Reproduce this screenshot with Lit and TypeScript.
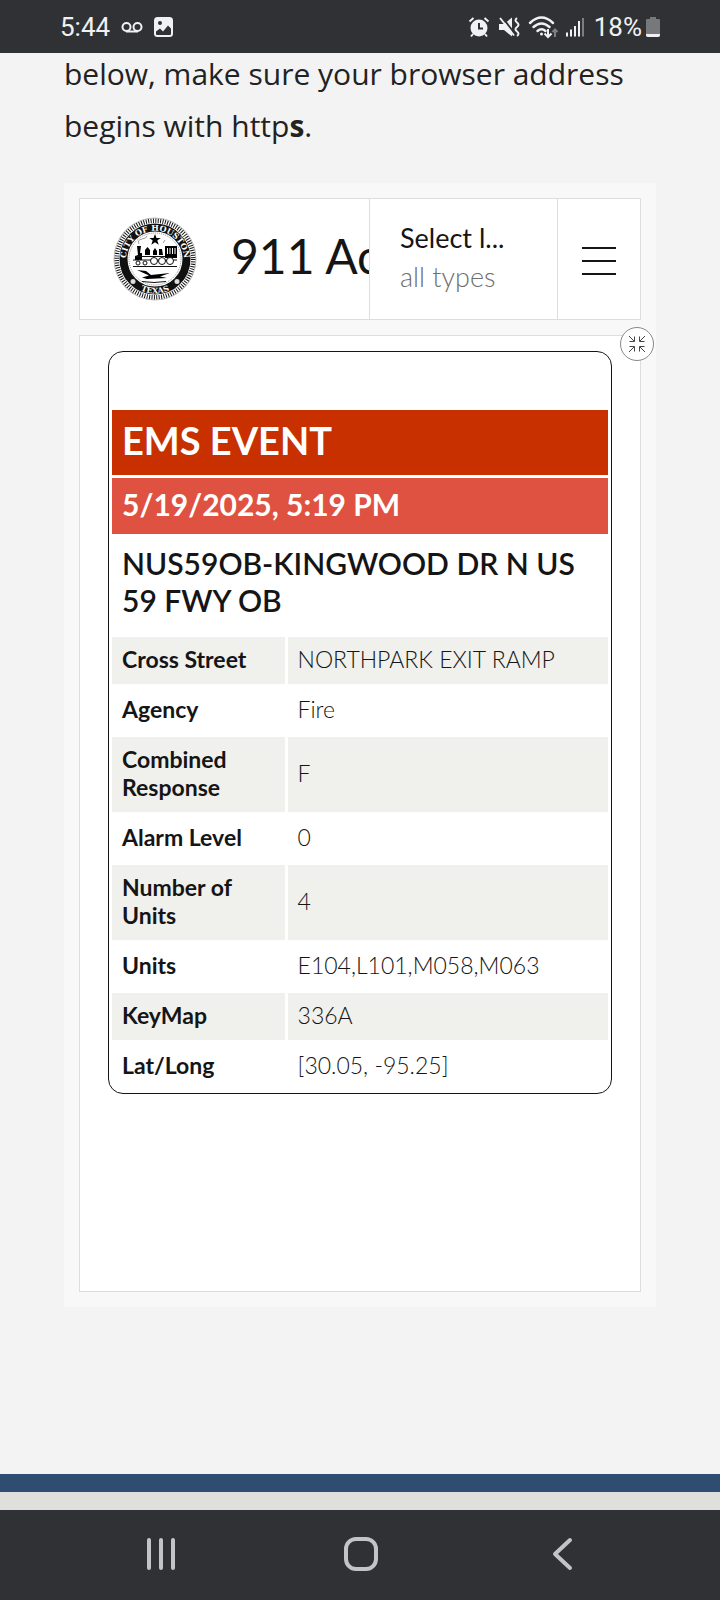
import { html, css, svg, LitElement } from "lit";
import { customElement, property } from "lit/decorators.js";

type Row = [label: string, value: string];

@customElement("city-seal")
export class CitySeal extends LitElement {
  render() {
    return html`
      <svg viewBox="0 0 84 84" role="img" aria-label="City of Houston, Texas">
        <defs>
          <path id="top" d="M17 57.500a29 29 0 1 1 50 0" />
          <path id="bottom" d="M7.500 42a34.500 34.500 0 0 0 69 0" />
        </defs>
        <circle class="rope" cx="42" cy="42" r="38.500" />
        <circle class="rim" cx="42" cy="42" r="41" />
        <circle class="band" cx="42" cy="42" r="31.500" />
        <circle class="beads" cx="42" cy="42" r="26" />
        <text><textPath href="#top" startOffset="50%">CITY OF HOUSTON</textPath></text>
        <text><textPath href="#bottom" startOffset="50%">TEXAS</textPath></text>
        <circle class="dot" cx="20" cy="64.500" r="2.500" />
        <circle class="dot" cx="64" cy="64.500" r="2.500" />
        ${this.emblem()}
      </svg>
    `;
  }

  emblem() {
    return svg`
      <path d="M42 17l1.500 4h4.200l-3.400 2.600 1.400 4.200-3.700-2.600-3.700 2.600 1.400-4.200-3.400-2.600h4.200z" />
      <path class="smoke" d="M26 27q-2-4 3-5t5-3M50 26l2-3" />
      <path d="M24 29h4l-1 7h2v7h-7v-4l3-1zM32 38v-5l2.500-3 2.500 3v5zM40 38v-4l2-3 2 3v4zM46 38v-6h3l1 6z" />
      <path d="M52 29h12v12H52z" />
      <path class="line" d="M54.500 31v6M57 31v6M59.500 31v6M62 31v6" />
      <path class="stroke" d="M22 39.500h30M20 43h44M20 49.500h44" />
      <circle class="wheel" cx="25" cy="46" r="2" />
      <circle class="wheel" cx="32" cy="46" r="2" />
      <circle class="wheel" cx="41" cy="44" r="3.500" />
      <circle class="wheel" cx="49" cy="44" r="3.500" />
      <circle class="wheel" cx="57" cy="44" r="3.500" />
      <path d="M24 53l9 1 5 4 19-2-10 3.500 7 1.500-20 1-5-1.500 7-2z" />
      <path class="stroke" d="M29 64.500q12 2 24 0" />
    `;
  }

  static styles = css`
    :host {
      display: block;
      flex: none;
      width: 84px;
      height: 84px;
    }

    svg {
      display: block;
    }

    #top,
    #bottom {
      fill: none;
    }

    .rope,
    .rim,
    .band,
    .beads,
    .stroke,
    .smoke,
    .wheel {
      fill: none;
      stroke: #111;
    }

    .rope {
      stroke-width: 5;
      stroke-dasharray: 1 1.420;
    }

    .rim {
      stroke: #bbb;
      stroke-width: 1;
    }

    .band {
      stroke-width: 8;
    }

    .beads {
      stroke: #888;
      stroke-width: 1;
      stroke-dasharray: 1 1;
    }

    .stroke {
      stroke-width: 1;
    }

    .smoke {
      stroke: #999;
      stroke-width: 1;
    }

    .wheel {
      fill: #fff;
      stroke-width: 1;
    }

    .line {
      stroke: #fff;
      stroke-width: 1;
    }

    .dot {
      fill: #ddd;
    }

    text {
      fill: #fff;
      font: bold 8px "DejaVu Serif", serif;
      text-anchor: middle;
    }
  `;
}

@customElement("status-bar")
export class StatusBar extends LitElement {
  render() {
    return html`
      <div class="group left">
        <span>5:44</span>
        <svg class="voicemail" width="22" height="20" viewBox="0 0 22 20">
          <circle cx="5.500" cy="10" r="4" />
          <circle cx="16.500" cy="10" r="4" />
          <path d="M5 14.500h12" />
        </svg>
        <svg width="19" height="20" viewBox="0 0 19 20">
          <rect width="19" height="20" rx="3.500" />
          <circle class="cut" cx="6" cy="6" r="2" />
          <path class="cut" d="M2 14.500l4-3 3 3 5-6 3 3v5.500a1 1 0 0 1-1 1H3a1 1 0 0 1-1-1z" />
        </svg>
      </div>
      <div class="group">
        <svg width="20" height="20" viewBox="0 0 20 20">
          <circle cx="10" cy="11" r="8.500" />
          <path class="line" d="M.5 4.500l4-3.500M19.500 4.500l-4-3.500M4 17l-2 2.500M16 17l2 2.500" />
          <path class="hands" d="M10 6v5.500h4" />
        </svg>
        <svg width="20" height="20" viewBox="0 0 20 20">
          <path d="M0 7h5l8-6.500v19l-8-6.500H0z" />
          <path class="slash" d="M3 0l13 17" />
          <path class="line" d="M1 1l14 17.500" />
          <path class="line" d="M18 1q-3 2.250 0 4.500t0 4.500 0 4.500 0 4.500" />
        </svg>
        <svg width="27" height="22" viewBox="0 0 27 22">
          <path class="wave" d="M1 7Q12.500-4 24 7M4.500 11q8-7 16 0M8.500 15q4-3.500 8 0" />
          <circle cx="12.500" cy="18" r="1.500" />
          <path class="line" d="M19 13v8M15.500 17.500l3.500 3.500 3.500-3.500" />
          <path class="dim" d="M26 21v-8M23.500 16l2.500-2.500 2.500 2.500" />
        </svg>
        <svg width="18" height="20" viewBox="0 0 18 20">
          <path class="line" d="M1 19.500v-4M5 19.500v-7M9 19.500V9M13 19.500V4" />
          <path class="dim" d="M17 19.500V1" />
        </svg>
        <span>18%</span>
        <svg class="battery" width="14" height="20" viewBox="0 0 14 20">
          <path class="shell" d="M4 0h6v2h3a1 1 0 0 1 1 1v15a2 2 0 0 1-2 2H2a2 2 0 0 1-2-2V3a1 1 0 0 1 1-1h3z" />
          <path d="M0 17h14v1a2 2 0 0 1-2 2H2a2 2 0 0 1-2-2z" />
        </svg>
      </div>
    `;
  }

  static styles = css`
    :host {
      display: flex;
      align-items: center;
      justify-content: space-between;
      height: 53px;
      padding: 0 60px;
      color: #f1f1f3;
      background: #303134;
      font: 26px Roboto, sans-serif;
    }

    .group {
      display: flex;
      align-items: center;
      gap: 10px;
    }

    .left {
      gap: 11px;
    }

    .battery {
      margin-left: -6px;
    }

    svg {
      display: block;
      overflow: visible;
      fill: #f1f1f3;
    }

    .voicemail,
    .line,
    .wave,
    .dim,
    .slash,
    .hands {
      fill: none;
      stroke: #f1f1f3;
      stroke-width: 2;
    }

    .dim {
      stroke: #7d7e80;
    }

    .wave {
      stroke-width: 2.500;
      stroke-linecap: round;
    }

    .cut {
      fill: #303134;
    }

    .slash,
    .hands {
      stroke: #303134;
    }

    .shell {
      fill: #77787a;
    }
  `;
}

@customElement("event-card")
export class EventCard extends LitElement {
  @property() type = "";
  @property() time = "";
  @property() location = "";
  @property({ attribute: false }) rows: Row[] = [];

  render() {
    return html`
      <table>
        <colgroup>
          <col class="label-column" />
          <col />
        </colgroup>
        <thead>
          <tr><th class="type" colspan="2">${this.type}</th></tr>
          <tr><th class="time" colspan="2">${this.time}</th></tr>
          <tr><th class="location" colspan="2">${this.location}</th></tr>
        </thead>
        <tbody>
          ${this.rows.map(
            ([label, value]) => html`
              <tr>
                <th scope="row">${label}</th>
                <td>${value}</td>
              </tr>
            `
          )}
        </tbody>
      </table>
    `;
  }

  static styles = css`
    :host {
      display: block;
      padding-top: 55px;
      border: 1px solid #151515;
      border-radius: 15px;
    }

    table {
      width: 100%;
      table-layout: fixed;
      border-spacing: 3px;
      color: #151515;
      font-size: 23px;
      line-height: 28px;
    }

    .label-column {
      width: 35%;
    }

    th,
    td {
      padding: 8px 10px 11px;
      text-align: left;
      font-weight: 700;
    }

    td {
      font-weight: 300;
    }

    tbody tr:nth-child(odd) > * {
      background: #f0f0ec;
    }

    .type {
      padding-bottom: 13px;
      color: #fff;
      background: #c83000;
      font-size: 38px;
      line-height: 44px;
    }

    .time {
      padding-bottom: 12px;
      color: #fff;
      background: #df5140;
      font-size: 30px;
      line-height: 36px;
    }

    .location {
      padding-bottom: 15px;
      font-size: 30px;
      font-weight: 600;
      line-height: 37px;
    }
  `;
}

@customElement("app-root")
export class AppRoot extends LitElement {
  rows: Row[] = [
    ["Cross Street", "NORTHPARK EXIT RAMP"],
    ["Agency", "Fire"],
    ["Combined Response", "F"],
    ["Alarm Level", "0"],
    ["Number of Units", "4"],
    ["Units", "E104,L101,M058,M063"],
    ["KeyMap", "336A"],
    ["Lat/Long", "[30.05, -95.25]"],
  ];

  render() {
    return html`
      <status-bar></status-bar>
      <main>
        <p class="intro">
          below, make sure your browser address begins with http<strong>s</strong>.
        </p>
        <section class="dashboard">
          <header>
            <div class="brand">
              <city-seal></city-seal>
              <h1>911 Active</h1>
            </div>
            <button class="filter">
              <span>Select l...</span>
              <span class="filter-value">all types</span>
            </button>
            <button class="menu" aria-label="Menu">
              <svg width="34" height="30" viewBox="0 0 34 30">
                <path d="M0 2h34M0 15h34M0 28h34" />
              </svg>
            </button>
          </header>
          <div class="content">
            <event-card
              type="EMS EVENT"
              time="5/19/2025, 5:19 PM"
              location="NUS59OB-KINGWOOD DR N US 59 FWY OB"
              .rows=${this.rows}
            ></event-card>
            <button class="collapse" aria-label="Collapse">
              <svg width="18" height="18" viewBox="0 0 18 18">
                <path d="M1 1l5 5M6.500 1.500v5h-5M17 1l-5 5M11.500 1.500v5h5M1 17l5-5M6.500 16.500v-5h-5M17 17l-5-5M11.500 16.500v-5h5" />
              </svg>
            </button>
          </div>
        </section>
      </main>
      <footer></footer>
      <nav>
        <button aria-label="Recents">
          <svg width="34" height="34" viewBox="0 0 34 34">
            <path d="M5 3v28M17 3v28M29 3v28" />
          </svg>
        </button>
        <button aria-label="Home">
          <svg width="34" height="34" viewBox="0 0 34 34">
            <rect x="2" y="2" width="30" height="30" rx="10" />
          </svg>
        </button>
        <button aria-label="Back">
          <svg width="34" height="34" viewBox="0 0 34 34">
            <path d="M26 3L11 17l15 14" />
          </svg>
        </button>
      </nav>
    `;
  }

  static styles = css`
    :host {
      display: flex;
      flex-direction: column;
      min-height: 100vh;
      background: #f3f3f3;
      font-family: Lato, "Liberation Sans", sans-serif;
    }

    button {
      padding: 0;
      border: 0;
      background: none;
      font: inherit;
    }

    svg {
      display: block;
      fill: none;
      stroke: currentColor;
    }

    main {
      display: flex;
      flex: 1;
      flex-direction: column;
      padding: 0 64px 167px;
    }

    /* the paragraph is scrolled partly under the status bar */
    .intro {
      margin: -5px 0 31px;
      color: #222;
      font-family: "Open Sans", sans-serif;
      font-size: 30px;
      line-height: 52px;
    }

    .dashboard {
      display: flex;
      flex: 1;
      flex-direction: column;
      gap: 15px;
      padding: 15px;
      background: #f8f8f8;
    }

    header {
      display: grid;
      grid-template-columns: minmax(0, 1fr) 188px 83px;
      height: 120px;
      border: 1px solid #ddd;
      color: #151515;
      background: #fff;
    }

    .brand {
      display: flex;
      align-items: center;
      gap: 34px;
      padding-left: 33px;
      overflow: hidden;
    }

    h1 {
      margin: 0;
      padding-bottom: 8px;
      font-size: 48px;
      font-weight: 400;
      white-space: nowrap;
    }

    .filter,
    .menu {
      border-left: 1px solid #ddd;
      color: #151515;
    }

    .filter {
      display: flex;
      flex-direction: column;
      align-items: flex-start;
      justify-content: center;
      gap: 5px;
      padding: 0 0 4px 30px;
      font-size: 27px;
      line-height: 34px;
    }

    .filter-value {
      color: #6e6e6e;
      font-weight: 300;
    }

    .menu {
      display: grid;
      place-items: center;
      padding-top: 4px;
      stroke-width: 2;
    }

    .content {
      position: relative;
      flex: 1;
      padding: 15px 28px;
      border: 1px solid #ddd;
      background: #fff;
    }

    .collapse {
      position: absolute;
      top: -9px;
      right: -14px;
      display: grid;
      place-items: center;
      width: 34px;
      height: 34px;
      border: 1px solid #888;
      border-radius: 50%;
      color: #444;
      background: #fff;
      stroke-width: 1;
    }

    footer {
      height: 18px;
      border-top: 18px solid #2e4d70;
      background: #dfdfdb;
    }

    nav {
      display: grid;
      grid-template-columns: repeat(3, 1fr);
      height: 90px;
      padding: 0 59px 0 61px;
      color: #c4c4c6;
      background: #303134;
    }

    nav button {
      display: grid;
      place-items: center;
      padding-bottom: 3px;
      color: inherit;
      stroke-width: 4;
      stroke-linecap: round;
      stroke-linejoin: round;
    }
  `;
}
